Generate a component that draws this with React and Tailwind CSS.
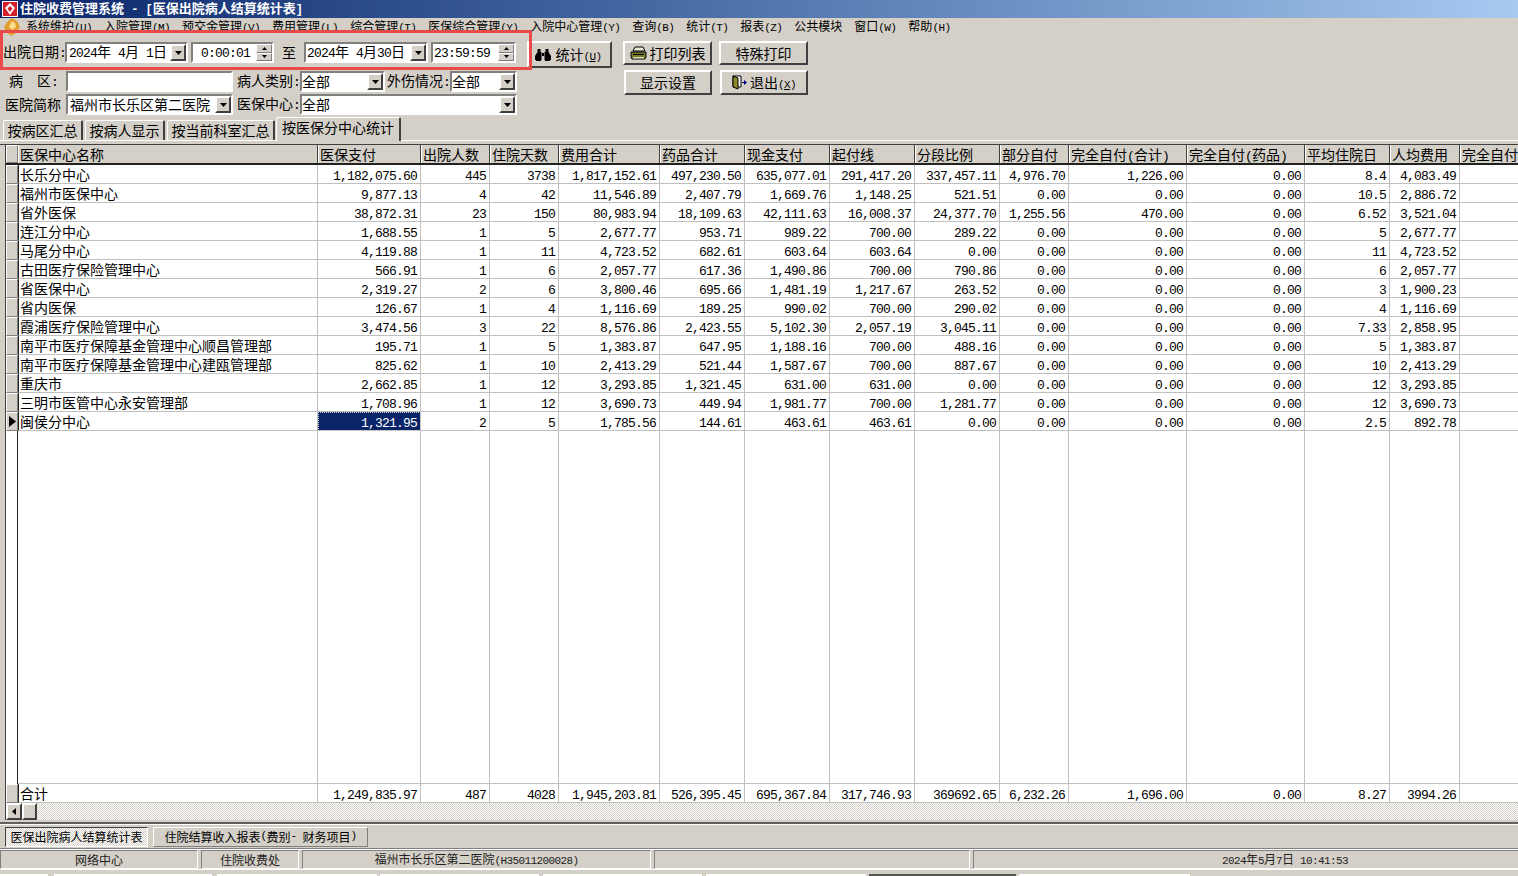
import React from "react";

const RAISED = "border border-t-white border-l-white border-r-[#808080] border-b-[#808080]";
const BUTTON = "border-2 border-t-white border-l-white border-r-[#404040] border-b-[#404040]";
const SUNKEN = "border-2 border-t-[#808080] border-l-[#808080] border-r-white border-b-white";
const THIN_SUNKEN = "border border-t-[#808080] border-l-[#808080] border-r-white border-b-white";
const LATIN_SMALL = "text-[11px] tracking-[-0.6px]";

const COLS = "grid grid-cols-[12px_300px_103px_69px_69px_101px_85px_85px_85px_85px_69px_118px_118px_85px_70px_59px]";

// 数字和字母用等宽字体，中文用黑体，宽度才对得上
const Txt = ({ children, latin = "text-[13px] tracking-[-0.8px]" }) => {
    const parts = String(children).match(/[\x00-\x7f]+|[^\x00-\x7f]+/g) || [];
    return parts.map((p, i) =>
        /^[\x00-\x7f]/.test(p) ? (
            <span key={i} className={`font-['Liberation_Mono',monospace] whitespace-pre ${latin}`}>{p}</span>
        ) : (
            <span key={i}>{p}</span>
        )
    );
};

const headers = ["医保中心名称", "医保支付", "出院人数", "住院天数", "费用合计", "药品合计", "现金支付", "起付线", "分段比例", "部分自付", "完全自付(合计)", "完全自付(药品)", "平均住院日", "人均费用", "完全自付"];

const rows = [
    ["长乐分中心", "1,182,075.60", "445", "3738", "1,817,152.61", "497,230.50", "635,077.01", "291,417.20", "337,457.11", "4,976.70", "1,226.00", "0.00", "8.4", "4,083.49"],
    ["福州市医保中心", "9,877.13", "4", "42", "11,546.89", "2,407.79", "1,669.76", "1,148.25", "521.51", "0.00", "0.00", "0.00", "10.5", "2,886.72"],
    ["省外医保", "38,872.31", "23", "150", "80,983.94", "18,109.63", "42,111.63", "16,008.37", "24,377.70", "1,255.56", "470.00", "0.00", "6.52", "3,521.04"],
    ["连江分中心", "1,688.55", "1", "5", "2,677.77", "953.71", "989.22", "700.00", "289.22", "0.00", "0.00", "0.00", "5", "2,677.77"],
    ["马尾分中心", "4,119.88", "1", "11", "4,723.52", "682.61", "603.64", "603.64", "0.00", "0.00", "0.00", "0.00", "11", "4,723.52"],
    ["古田医疗保险管理中心", "566.91", "1", "6", "2,057.77", "617.36", "1,490.86", "700.00", "790.86", "0.00", "0.00", "0.00", "6", "2,057.77"],
    ["省医保中心", "2,319.27", "2", "6", "3,800.46", "695.66", "1,481.19", "1,217.67", "263.52", "0.00", "0.00", "0.00", "3", "1,900.23"],
    ["省内医保", "126.67", "1", "4", "1,116.69", "189.25", "990.02", "700.00", "290.02", "0.00", "0.00", "0.00", "4", "1,116.69"],
    ["霞浦医疗保险管理中心", "3,474.56", "3", "22", "8,576.86", "2,423.55", "5,102.30", "2,057.19", "3,045.11", "0.00", "0.00", "0.00", "7.33", "2,858.95"],
    ["南平市医疗保障基金管理中心顺昌管理部", "195.71", "1", "5", "1,383.87", "647.95", "1,188.16", "700.00", "488.16", "0.00", "0.00", "0.00", "5", "1,383.87"],
    ["南平市医疗保障基金管理中心建瓯管理部", "825.62", "1", "10", "2,413.29", "521.44", "1,587.67", "700.00", "887.67", "0.00", "0.00", "0.00", "10", "2,413.29"],
    ["重庆市", "2,662.85", "1", "12", "3,293.85", "1,321.45", "631.00", "631.00", "0.00", "0.00", "0.00", "0.00", "12", "3,293.85"],
    ["三明市医管中心永安管理部", "1,708.96", "1", "12", "3,690.73", "449.94", "1,981.77", "700.00", "1,281.77", "0.00", "0.00", "0.00", "12", "3,690.73"],
    ["闽侯分中心", "1,321.95", "2", "5", "1,785.56", "144.61", "463.61", "463.61", "0.00", "0.00", "0.00", "0.00", "2.5", "892.78"],
];

const totals = ["合计", "1,249,835.97", "487", "4028", "1,945,203.81", "526,395.45", "695,367.84", "317,746.93", "369692.65", "6,232.26", "1,696.00", "0.00", "8.27", "3994.26"];

const menus = ["系统维护(U)", "入院管理(M)", "预交金管理(V)", "费用管理(L)", "综合管理(T)", "医保综合管理(Y)", "入院中心管理(Y)", "查询(B)", "统计(T)", "报表(Z)", "公共模块", "窗口(W)", "帮助(H)"];

const Arrow = () => (
    <svg width="7" height="4" viewBox="0 0 7 4"><path d="M0 0h7L3.500 4z" fill="#000" /></svg>
);

const DropButton = () => (
    <div className={`w-[16px] h-full shrink-0 bg-[#d4d0c8] flex items-center justify-center ${BUTTON}`}>
        <Arrow />
    </div>
);

const Combo = ({ width, children, pad = "" }) => (
    <div className={`h-[21px] bg-white flex items-center justify-between shrink-0 overflow-hidden ${SUNKEN} ${width}`}>
        <span className={`whitespace-pre text-[14px] leading-[17px] ${pad}`}><Txt>{children}</Txt></span>
        <DropButton />
    </div>
);

const Spin = ({ width, children, align }) => (
    <div className={`h-[21px] bg-white flex items-center justify-between shrink-0 overflow-hidden ${SUNKEN} ${width}`}>
        <span className={`whitespace-pre ${align}`}><Txt>{children}</Txt></span>
        <div className="w-[16px] h-full flex flex-col shrink-0 bg-[#d4d0c8]">
            <div className={`flex-1 flex items-center justify-center ${RAISED}`}>
                <svg width="5" height="3" viewBox="0 0 5 3"><path d="M0 3h5L2.500 0z" fill="#000" /></svg>
            </div>
            <div className={`flex-1 flex items-center justify-center ${RAISED}`}>
                <svg width="5" height="3" viewBox="0 0 5 3"><path d="M0 0h5L2.500 3z" fill="#000" /></svg>
            </div>
        </div>
    </div>
);

const Binoculars = () => (
    <svg width="16" height="14" viewBox="0 0 16 14" fill="#000">
        <path d="M2.500 1h3v3h1v8H6v1H1v-1H0V8l2.500-4zM10.500 1h3v3L16 8v4h-1v1h-5v-1h-.5V4h1z" />
        <rect x="7" y="5" width="2" height="3" />
    </svg>
);

const Printer = () => (
    <svg width="17" height="15" viewBox="0 0 17 15">
        <path d="M5 1h8l2 4H3z" fill="#e8e8d8" stroke="#000" />
        <path d="M1 6h15v5l-1 2H2l-1-2z" fill="#7a7a2a" stroke="#000" />
        <rect x="3" y="8" width="11" height="1" fill="#000" />
        <rect x="3" y="11" width="11" height="1.500" fill="#d8d8c0" />
    </svg>
);

const ExitDoor = () => (
    <svg width="15" height="15" viewBox="0 0 15 15">
        <path d="M1 1h8v11H1z" fill="#fff" stroke="#000" />
        <path d="M1 1l5 2v11l-5-2z" fill="#8a8a2a" stroke="#000" />
        <path d="M10 7h2V5l3 2.500L12 10V8h-2z" fill="#000080" />
    </svg>
);

const Logo = () => (
    <svg width="16" height="16" viewBox="0 0 16 16" className="shrink-0">
        <rect width="16" height="16" fill="#fff" />
        <rect x="1" y="1" width="14" height="14" fill="#d3202a" />
        <path d="M8 2l5 5-5 7-5-7z" fill="#fff" />
        <path d="M8 5l2.500 2.500L8 11 5.500 7.500z" fill="#d3202a" />
    </svg>
);

const Coin = () => (
    <svg width="18" height="18" viewBox="0 0 18 18" className="shrink-0">
        <path d="M9 0l5 3 3 6-4 6-5 3-5-4-2-5 4-6z" fill="#e0a030" />
        <path d="M9 3l3 2 1 4-4 3-3-3z" fill="#f8dc8a" />
    </svg>
);

const ToolButton = ({ className, children }) => (
    <div className={`flex items-center justify-center bg-[#d4d0c8] text-[14px] ${BUTTON} ${className}`}>{children}</div>
);

const Tab = ({ active, width, children }) => (
    <div className={`flex items-center justify-center text-[14px] bg-[#d4d0c8] border-t border-l border-white border-r-2 border-r-[#404040] rounded-t-[2px] shrink-0 ${width} ${active ? "h-[24px] -mb-[1px] -ml-[1px] pb-[4px] z-10" : "h-[20px]"}`}>
        {children}
    </div>
);

const HeaderRow = () => (
    <div className={`${COLS} h-[20px] shrink-0 bg-[#d4d0c8] border-b-2 border-b-[#222]`}>
        <div className={RAISED} />
        {headers.map((h, i) => (
            <div key={i} className={`pl-[1px] text-[14px] leading-[18px] whitespace-nowrap overflow-hidden border-r border-r-[#404040] border-l border-l-white ${i === 0 ? "border-l-[#222]" : ""}`}>
                <Txt>{h}</Txt>
            </div>
        ))}
    </div>
);

const DataRow = ({ cells, current }) => (
    <div className={`${COLS} h-[19px] shrink-0 bg-white`}>
        <div className={`bg-[#d4d0c8] flex items-center justify-center ${RAISED}`}>
            {current && <svg width="7" height="11" viewBox="0 0 7 11"><path d="M0 0l7 5.500L0 11z" fill="#000" /></svg>}
        </div>
        {cells.map((c, i) => (
            <div
                key={i}
                className={`text-[14px] leading-[18px] overflow-hidden whitespace-nowrap border-r border-b border-[#c0c0c0] ${i === 0 ? "border-l border-l-[#222] pl-[1px]" : "text-right pr-[3px]"} ${current && i === 1 ? "bg-[#0a246a] text-white outline-dotted outline-1 -outline-offset-1 outline-[#d4d0c8]" : ""}`}
            >
                <Txt>{c}</Txt>
            </div>
        ))}
        <div className="border-b border-[#c0c0c0]" />
    </div>
);

const EmptyRow = () => (
    <div className={`${COLS} flex-1 min-h-0 bg-white`}>
        <div className="bg-white border-r border-r-[#222]" />
        {headers.map((h, i) => (
            <div key={i} className={`border-b border-[#c0c0c0] ${i < 14 ? "border-r" : ""}`} />
        ))}
    </div>
);

const StatusCell = ({ width, children, className = "" }) => (
    <div className={`h-[19px] flex items-center justify-center text-[12px] leading-[15px] text-[#222] shrink-0 ${THIN_SUNKEN} ${width} ${className}`}>
        {children}
    </div>
);

export default function App() {
    return (
        <div className="relative w-[1518px] h-[876px] overflow-hidden bg-[#d4d0c8] text-black font-['Noto_Sans_CJK_SC',sans-serif] flex flex-col">
            {/* 标题栏 */}
            <div className="h-[18px] shrink-0 flex items-center gap-[2px] pl-[2px] bg-gradient-to-r from-[#0a246a] to-[#a6caf0] text-white text-[13px] leading-[15px] font-bold whitespace-pre">
                <Logo />
                <span className="pb-[1px]"><Txt latin="text-[12px]">住院收费管理系统 - [医保出院病人结算统计表]</Txt></span>
            </div>

            {/* 菜单 */}
            <div className="h-[18px] shrink-0 flex items-center text-[12px] leading-[15px] pl-[3px]">
                <Coin />
                <div className="flex gap-3 ml-[5px] pb-[1px]">
                    {menus.map((m) => (
                        <span key={m} className="whitespace-nowrap"><Txt latin={LATIN_SMALL}>{m}</Txt></span>
                    ))}
                </div>
            </div>

            {/* 查询条件 */}
            <div className="h-[81px] shrink-0 flex pt-[5px]">
                <div className="w-[527px] shrink-0 flex flex-col text-[14px]">
                    <div className="flex items-center h-[23px]">
                        <span className="ml-[3px] w-[62px] shrink-0 whitespace-nowrap"><Txt>出院日期:</Txt></span>
                        <Combo width="w-[123px]" pad="pl-[2px]">{"2024年 4月 1日"}</Combo>
                        <div className="w-[3px]" />
                        <Spin width="w-[83px]" align="pl-[8px]">0:00:01</Spin>
                        <span className="w-[30px] text-center shrink-0">至</span>
                        <Combo width="w-[124px]" pad="pl-[1px]">{"2024年 4月30日"}</Combo>
                        <div className="w-[3px]" />
                        <Spin width="w-[85px]" align="pl-[1px]">23:59:59</Spin>
                    </div>
                    <div className="flex items-center h-[21px] mt-[7px]">
                        <span className="ml-[9px] w-[57px] shrink-0 whitespace-pre"><Txt>{"病  区:"}</Txt></span>
                        <div className={`h-[21px] w-[167px] bg-white shrink-0 ${SUNKEN}`} />
                        <span className="w-[67px] text-right shrink-0 whitespace-nowrap"><Txt>病人类别:</Txt></span>
                        <Combo width="w-[85px]">全部</Combo>
                        <span className="w-[65px] text-right shrink-0 whitespace-nowrap"><Txt>外伤情况:</Txt></span>
                        <Combo width="w-[67px]">全部</Combo>
                    </div>
                    <div className="flex items-center h-[21px] mt-[2px]">
                        <span className="ml-[5px] w-[61px] shrink-0 whitespace-nowrap">医院简称</span>
                        <Combo width="w-[167px]" pad="pl-[2px]">福州市长乐区第二医院</Combo>
                        <span className="w-[67px] text-right shrink-0 whitespace-nowrap"><Txt>医保中心:</Txt></span>
                        <Combo width="w-[217px]">全部</Combo>
                    </div>
                </div>
                <ToolButton className="w-[85px] h-[27px] gap-[4px] shrink-0 pr-[2px]">
                    <Binoculars />
                    <span>统计<span className={`font-['Liberation_Mono',monospace] ${LATIN_SMALL}`}>(<u>U</u>)</span></span>
                </ToolButton>
                <div className="ml-[11px] grid grid-cols-[89px_89px] grid-rows-[24px_25px] gap-x-[7px] gap-y-[5px] content-start">
                    <ToolButton className="gap-[3px]"><Printer />打印列表</ToolButton>
                    <ToolButton>特殊打印</ToolButton>
                    <ToolButton className="ml-[1px]">显示设置</ToolButton>
                    <ToolButton className="ml-[1px] gap-[3px]"><ExitDoor /><span>退出<span className={`font-['Liberation_Mono',monospace] ${LATIN_SMALL}`}>(<u>X</u>)</span></span></ToolButton>
                </div>
            </div>

            {/* 页签 */}
            <div className="h-[23px] shrink-0 flex items-end pl-[3px] gap-[2px] relative">
                <Tab width="w-[80px]">按病区汇总</Tab>
                <Tab width="w-[80px]">按病人显示</Tab>
                <Tab width="w-[108px]">按当前科室汇总</Tab>
                <Tab active width="w-[125px]">按医保分中心统计</Tab>
            </div>
            <div className="h-[4px] shrink-0 border-t border-t-white" />

            {/* 表格 */}
            <div className="flex-1 min-h-0 flex flex-col pl-[5px] border-t border-t-[#404040]">
                <div className="flex-1 min-h-0 flex flex-col border-l border-l-[#404040]">
                    <HeaderRow />
                    {rows.map((r, i) => (
                        <DataRow key={i} cells={r} current={i === rows.length - 1} />
                    ))}
                    <EmptyRow />
                    <DataRow cells={totals} />
                    <div className="h-[17px] shrink-0 flex bg-[repeating-conic-gradient(#d4d0c8_0_25%,#ffffff_0_50%)] bg-[length:2px_2px]">
                        <div className={`w-[16px] bg-[#d4d0c8] flex items-center justify-center ${BUTTON}`}>
                            <svg width="4" height="7" viewBox="0 0 4 7"><path d="M4 0v7L0 3.500z" fill="#000" /></svg>
                        </div>
                        <div className={`w-[15px] bg-[#d4d0c8] ${BUTTON}`} />
                    </div>
                </div>
            </div>

            {/* 窗口标签 */}
            <div className="h-[4px] shrink-0 border-b-2 border-b-[#606060]" />
            <div className="h-[24px] shrink-0 flex items-center pl-[5px] gap-[5px] text-[12px] border-t border-t-white">
                <div className="w-[143px] h-[20px] flex items-center justify-center whitespace-nowrap bg-[repeating-conic-gradient(#d4d0c8_0_25%,#ffffff_0_50%)] bg-[length:2px_2px] border border-t-[#404040] border-l-[#404040] border-r-white border-b-white">
                    医保出院病人结算统计表
                </div>
                <div className={`w-[215px] h-[20px] flex items-center justify-center whitespace-pre ${RAISED}`}>
                    <Txt latin={LATIN_SMALL}>住院结算收入报表(费别- 财务项目)</Txt>
                </div>
            </div>

            {/* 状态栏 */}
            <div className="h-[2px] shrink-0 border-t border-t-[#808080] border-b border-b-white" />
            <div className="h-[19px] shrink-0 flex gap-[3px]">
                <StatusCell width="w-[198px]">网络中心</StatusCell>
                <StatusCell width="w-[98px]">住院收费处</StatusCell>
                <StatusCell width="w-[349px]"><span><Txt latin={LATIN_SMALL}>福州市长乐区第二医院(H35011200028)</Txt></span></StatusCell>
                <StatusCell width="w-[316px]" />
                <StatusCell width="w-[548px]" className="pl-[76px]"><span><Txt latin={LATIN_SMALL}>2024年5月7日 10:41:53</Txt></span></StatusCell>
            </div>

            {/* 底部任务栏露出的一截 */}
            <div className="h-[7px] shrink-0 flex items-end gap-[3px] border-t border-t-white">
                <div className="w-[48px] h-[2px] bg-white" />
                <div className="ml-[3px] w-[158px] h-[2px] bg-white" />
                <div className="ml-[2px] w-[160px] h-[2px] bg-white" />
                <div className="w-[159px] h-[2px] bg-white" />
                <div className="ml-[1px] w-[159px] h-[2px] bg-white" />
                <div className="ml-[1px] w-[160px] h-[2px] bg-white" />
                <div className="w-[147px] h-[2px] bg-[#555]" />
                <div className="w-[171px] h-[2px] bg-white" />
            </div>

            {/* 红框标注 */}
            <div className="absolute left-0 top-[30px] w-[532px] h-[40px] border-[3px] border-[#e84a4a] pointer-events-none" />
        </div>
    );
}
